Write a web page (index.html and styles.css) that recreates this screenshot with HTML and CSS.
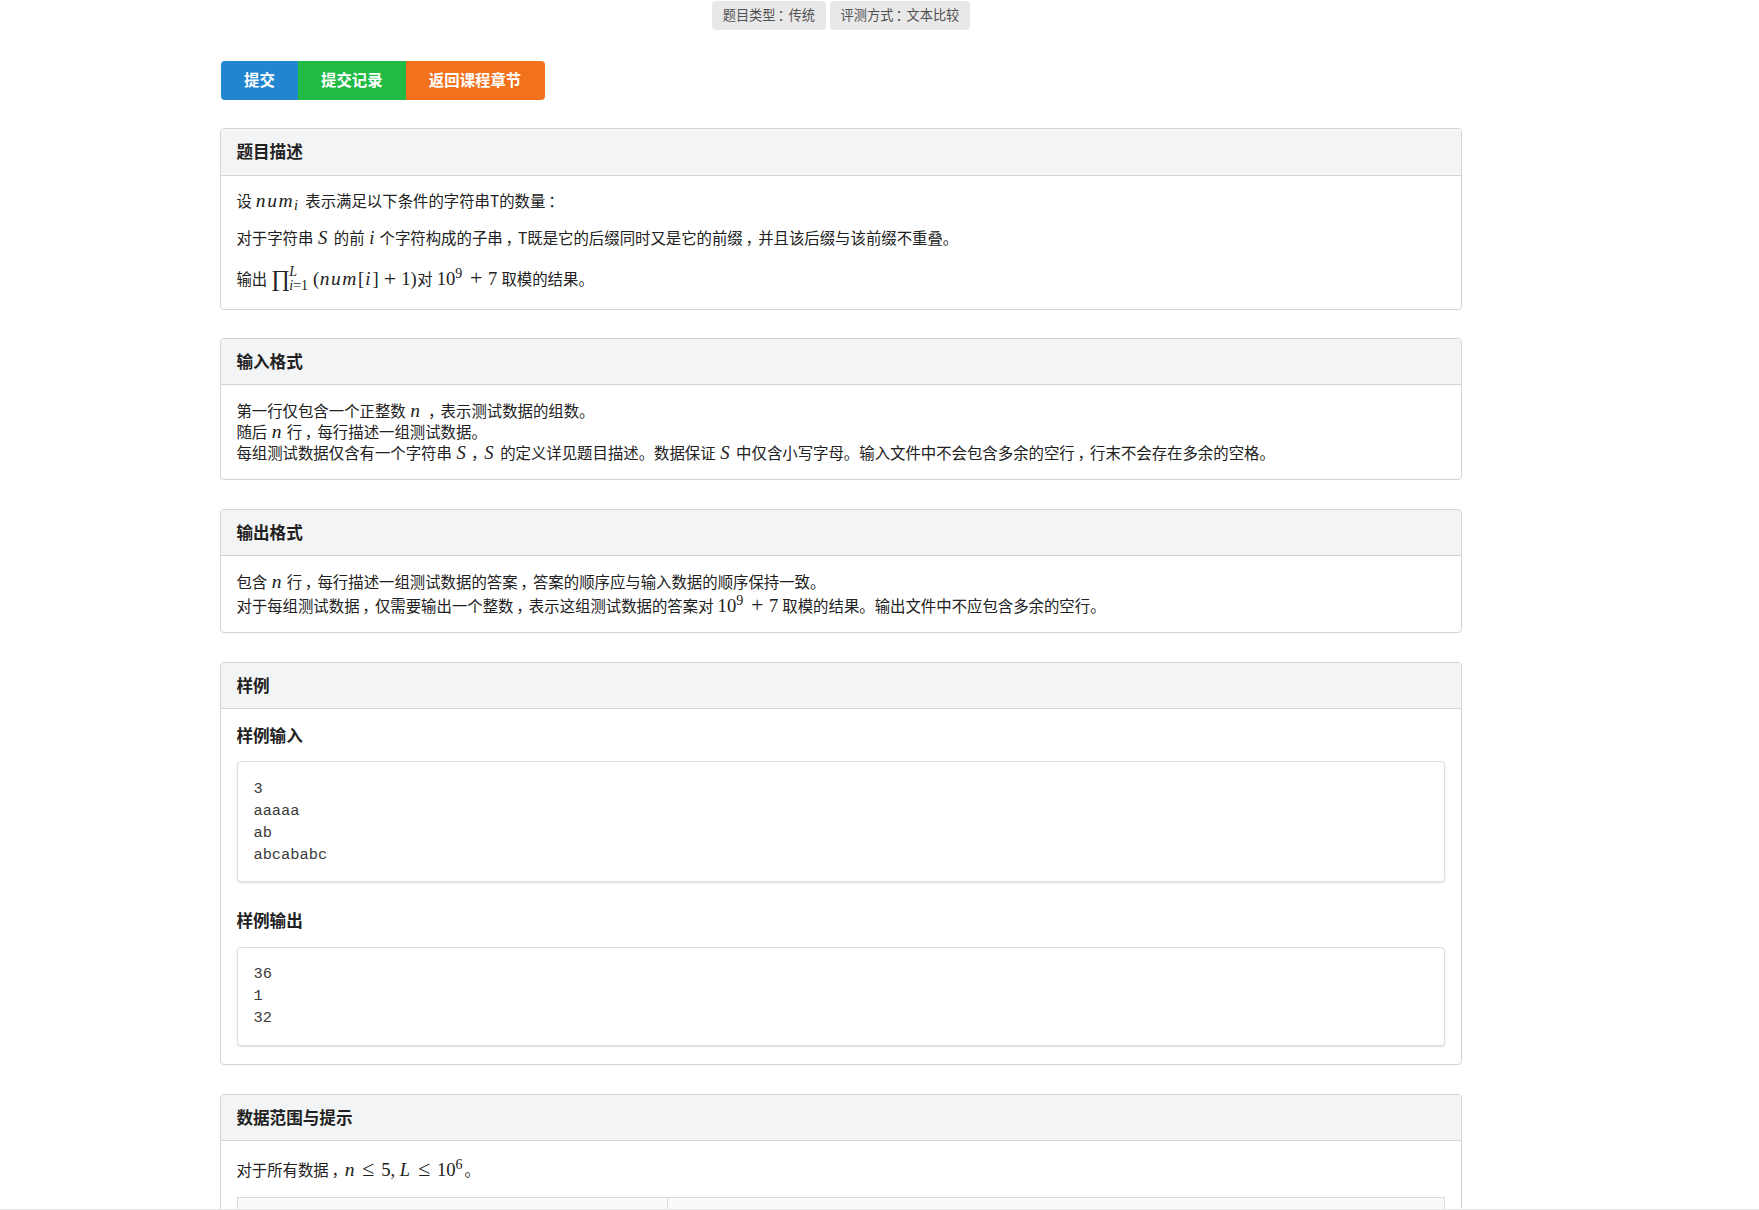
FILE: index.html
```
<!DOCTYPE html>
<html lang="zh-CN">
<head>
<meta charset="utf-8">
<meta name="viewport" content="width=device-width,initial-scale=1.0">
<title>题目</title>
<link rel="stylesheet" href="styles.css">
</head>
<body>
<div class="page">
<div class="container">
  <div class="labels">
    <span class="label">题目类型<span class="pc">：</span>传统</span>
    <span class="label">评测方式<span class="pc">：</span>文本比较</span>
  </div>

  <div class="buttons">
    <a class="button blue">提交</a>
    <a class="button green">提交记录</a>
    <a class="button orange">返回课程章节</a>
  </div>

  <div class="section description">
    <h4 class="header">题目描述</h4>
    <div class="segment">
      <p>设 <span class="math num"><i>num</i><sub><i>i</i></sub></span> 表示满足以下条件的字符串T的数量<span class="pc">：</span></p>
      <p>对于字符串 <span class="math s"><i>S</i></span> 的前 <span class="math i"><i>i</i></span> 个字符构成的子串<span class="pc">，</span>T既是它的后缀同时又是它的前缀<span class="pc">，</span>并且该后缀与该前缀不重叠。</p>
      <p>输出 <span class="math product"><span class="prod">∏</span><span class="limits"><span><i>L</i></span><span><i>i</i>=1</span></span><span class="paren">(</span><i class="word">num</i>[<i class="idx">i</i>]<span class="op">+</span>1<span class="paren">)</span></span>对 <span class="math">10<sup>9</sup><span class="op">+</span>7</span> 取模的结果。</p>
    </div>
  </div>

  <div class="section input">
    <h4 class="header">输入格式</h4>
    <div class="segment">
      第一行仅包含一个正整数 <span class="math n"><i>n</i></span> <span class="pc">，</span>表示测试数据的组数。<br>
      随后 <span class="math n"><i>n</i></span> 行<span class="pc">，</span>每行描述一组测试数据。<br>
      每组测试数据仅含有一个字符串 <span class="math s"><i>S</i></span><span class="pc">，</span><span class="math s"><i>S</i></span> 的定义详见题目描述。数据保证 <span class="math s"><i>S</i></span> 中仅含小写字母。输入文件中不会包含多余的空行<span class="pc">，</span>行末不会存在多余的空格。
    </div>
  </div>

  <div class="section output">
    <h4 class="header">输出格式</h4>
    <div class="segment">
      包含 <span class="math n"><i>n</i></span> 行<span class="pc">，</span>每行描述一组测试数据的答案<span class="pc">，</span>答案的顺序应与输入数据的顺序保持一致。<br>
      对于每组测试数据<span class="pc">，</span>仅需要输出一个整数<span class="pc">，</span>表示这组测试数据的答案对 <span class="math tall">10<sup>9</sup><span class="op">+</span>7</span> 取模的结果。输出文件中不应包含多余的空行。
    </div>
  </div>

  <div class="section sample">
    <h4 class="header">样例</h4>
    <div class="segment">
      <h4>样例输入</h4>
      <pre>3
aaaaa
ab
abcababc</pre>
      <h4>样例输出</h4>
      <pre>36
1
32</pre>
    </div>
  </div>

  <div class="section hint">
    <h4 class="header">数据范围与提示</h4>
    <div class="segment">
      <p>对于所有数据<span class="pc">，</span><span class="math"><span class="n"><i>n</i></span><span class="rel">≤</span>5<span class="comma">,</span><span class="l"><i>L</i></span><span class="rel">≤</span>10<sup>6</sup></span>。</p>
      <table>
        <tr><th class="first"></th><th></th></tr>
      </table>
    </div>
  </div>
</div>
</div>
</body>
</html>
```
FILE: styles.css
```
* {
  box-sizing: border-box;
}
body {
  margin: 0;
  background: #fff;
  color: #212121;
  font: 15.4px/21px "Noto Sans CJK SC", sans-serif;
  text-spacing-trim: space-all;
  word-spacing: .6px;
}
.page {
  height: 1210px;
  overflow: hidden;
  border-bottom: 1px solid #e8e8e8;
}
.container {
  width: 1242px;
  margin: 0 0 0 220px;
}
.labels {
  display: flex;
  justify-content: center;
  gap: 4px;
  padding-top: 1px;
}
.label {
  padding: 0 10.8px;
  height: 29px;
  line-height: 28px;
  font-size: 13.2px;
  color: #505050;
  background: #e8e8e8;
  border-radius: 4px;
}
/* full-width punctuation sits in the middle of its cell */
.pc {
  display: inline-block;
  width: 1em;
  text-indent: .18em;
}
.buttons {
  display: flex;
  margin: 31px 0 28px 1px;
}
.button {
  height: 39px;
  padding: 0 23.1px;
  line-height: 37px;
  color: #fff;
  font-weight: bold;
}
.button:first-child {
  border-radius: 4px 0 0 4px;
}
.button:last-child {
  padding-right: 24px;
  border-radius: 0 4px 4px 0;
}
.blue {
  background: #2185d0;
}
.green {
  background: #21ba45;
}
.orange {
  background: #f2711c;
}
.section {
  border: 1px solid #d4d4d5;
  border-radius: 4px;
  margin-bottom: 28px;
  overflow: hidden;
}
h4 {
  margin: 0;
  font-size: 16.6px;
  font-weight: bold;
  line-height: 22px;
}
.header {
  height: 46px;
  padding: 11px 15.4px;
  background: #f3f4f5;
  border-bottom: 1px solid #d4d4d5;
}
.segment {
  padding: 15.4px;
}
p {
  margin: 0;
}
.description {
  height: 182px;
}
.description .header {
  height: 47px;
}
.description .segment {
  padding-top: 14.4px;
}
.description p {
  margin-bottom: 16px;
}
.description p:last-child {
  margin-top: 19.6px;
}
.input {
  height: 142px;
  margin-bottom: 29px;
}
.output {
  height: 124px;
  margin-bottom: 29px;
}
.sample {
  height: 403px;
  margin-bottom: 29px;
}
.math {
  display: inline-block;
  height: 21px;
  font: 18.6px/21px "Liberation Serif", serif;
  word-spacing: 0;
  white-space: nowrap;
}
.math sub,
.math sup {
  font-size: 14px;
  line-height: 0;
}
.math sub {
  vertical-align: -3px;
}
.math sup {
  vertical-align: 7px;
  margin-right: 2px;
}
.num {
  width: 45.4px;
}
.num > i,
.word {
  font-size: 19.5px;
  letter-spacing: .08em;
}
.s {
  width: 12.4px;
  padding-left: .6px;
}
.i {
  width: 6.8px;
  padding-left: .6px;
}
.n {
  display: inline-block;
  width: 11.4px;
  padding-left: .6px;
  font-size: 19.5px;
}
.l {
  display: inline-block;
  width: 12.7px;
  padding-left: 1px;
}
.op,
.rel {
  display: inline-block;
  width: 23.8px;
  font-size: 22px;
  line-height: 1px;
  text-align: center;
}
.rel {
  width: 25.6px;
}
.comma {
  display: inline-block;
  width: .444em;
}
.prod {
  width: 18px;
  font-size: 23px;
  line-height: 21px;
}
.limits {
  display: flex;
  flex-direction: column;
  width: 25px;
  font-size: 14px;
  line-height: 14px;
}
.paren {
  width: 7px;
}
.product {
  display: inline-flex;
  align-items: center;
  width: 146px;
  vertical-align: middle;
  margin: -2px 0 2px;
}
.product .idx {
  margin: 0 2px 0 1px;
}
.product .op {
  line-height: 21px;
}
.tall {
  height: 27px;
  line-height: 27px;
}
.sample .segment {
  padding: 15.4px 16px;
}
.sample .segment h4 {
  margin-left: -.6px;
}
pre {
  margin: 15px 0 27px;
  padding: 15.4px;
  border: 1px solid #dededf;
  border-radius: 4px;
  box-shadow: 0 1px 2px rgba(34, 36, 38, .15);
  font: 15.4px/22px "Liberation Mono", monospace;
  color: #3c3c3c;
}
pre:last-child {
  margin-top: 15.8px;
}
.hint {
  height: 300px;
}
.hint .segment {
  padding: 18.4px 16px;
}
.hint p {
  margin-left: -.6px;
}
table {
  width: 100%;
  margin-top: 17px;
  border-collapse: collapse;
}
th {
  height: 46px;
  border: 1px solid #d9dadb;
  background: #f9fafb;
}
.first {
  width: 430px;
}
```
